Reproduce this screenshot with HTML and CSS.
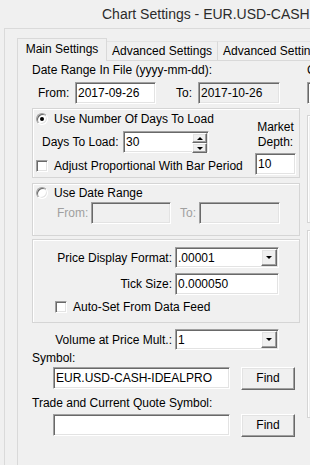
FILE: index.html
```html
<!DOCTYPE html>
<html lang="en">
<head>
    <meta charset="UTF-8">
    <meta name="viewport" content="width=device-width, initial-scale=1.0">
    <title>Chart Settings</title>
    <link rel="stylesheet" href="styles.css">
</head>
<body>
    <div class="titlebar">Chart Settings - EUR.USD-CASH</div>
    <div class="window">
        <div class="tabs">
            <div class="tab active">Main Settings</div>
            <div class="tab">Advanced Settings</div>
            <div class="tab">Advanced Settings 2</div>
        </div>
        <div class="tab-page">
            <div class="main-col">
                <div class="line top-label">Date Range In File (yyyy-mm-dd):</div>
                <div class="row file-range">
                    <span class="lbl lbl-from">From:</span>
                    <div class="field w-from">2017-09-26</div>
                    <span class="lbl lbl-to">To:</span>
                    <div class="field readonly w-to">2017-10-26</div>
                </div>

                <div class="group group-days">
                    <div class="days-left">
                        <div class="opt"><span class="radio checked"></span>Use Number Of Days To Load</div>
                        <div class="row days-row">
                            <span class="lbl lbl-days">Days To Load:</span>
                            <div class="field w-days">30
                                <span class="spin">
                                    <span class="spin-btn"><i class="tri up"></i></span>
                                    <span class="spin-btn"><i class="tri"></i></span>
                                </span>
                            </div>
                        </div>
                        <div class="opt check-row"><span class="check"></span>Adjust Proportional With Bar Period</div>
                    </div>
                    <div class="depth">
                        <div class="depth-lbl">Market<br>Depth:</div>
                        <div class="field w-depth">10</div>
                    </div>
                </div>

                <div class="group group-range">
                    <div class="opt"><span class="radio"></span>Use Date Range</div>
                    <div class="row range-row">
                        <span class="lbl disabled lbl-rfrom">From:</span>
                        <div class="field readonly w-rfrom"></div>
                        <span class="lbl disabled lbl-rto">To:</span>
                        <div class="field readonly w-rto"></div>
                    </div>
                </div>

                <div class="group group-price">
                    <div class="form-row first">
                        <span class="flabel">Price Display Format:</span>
                        <div class="field select">.00001<span class="drop"><i class="tri"></i></span></div>
                    </div>
                    <div class="form-row">
                        <span class="flabel">Tick Size:</span>
                        <div class="field tall">0.000050</div>
                    </div>
                    <div class="opt auto-set"><span class="check"></span>Auto-Set From Data Feed</div>
                </div>

                <div class="form-row volume">
                    <span class="flabel">Volume at Price Mult.:</span>
                    <div class="field select">1<span class="drop"><i class="tri"></i></span></div>
                </div>

                <div class="line symbol-label">Symbol:</div>
                <div class="row symbol-row">
                    <div class="field w-symbol">EUR.USD-CASH-IDEALPRO</div>
                    <button class="btn">Find</button>
                </div>

                <div class="line quote-label">Trade and Current Quote Symbol:</div>
                <div class="row quote-row">
                    <div class="field w-symbol"></div>
                    <button class="btn">Find</button>
                </div>
            </div>

            <div class="side-col">
                <div class="line top-label">Chart Region:</div>
                <div class="field side-field"></div>
                <div class="group side-box-1"></div>
                <div class="group side-box-2"></div>
            </div>
        </div>
    </div>
</body>
</html>
```

FILE: styles.css
```css
* {
    box-sizing: border-box;
}
body {
    margin: 0;
    width: 310px;
    height: 465px;
    overflow: hidden;
    background: #f0f0f0;
    font-family: 'Liberation Sans', Arial, sans-serif;
    font-size: 12px;
    color: #000;
}
.titlebar {
    height: 28px;
    padding-left: 102px;
    font-size: 14px;
    line-height: 28px;
    white-space: nowrap;
    color: #2b2b2b;
}
.window {
    width: 700px;
    height: 437px;
    margin-left: 4px;
    padding: 9px 0 0 12px;
    border-top: 1px solid #dadada;
    border-left: 1px solid #dadada;
}

/* tab strip */
.tabs {
    display: flex;
    align-items: flex-end;
    height: 22px;
}
.tab {
    height: 19px;
    padding: 0 5px;
    line-height: 19px;
    white-space: nowrap;
    border-top: 1px solid #e3e3e3;
    border-right: 1px solid #d9d9d9;
}
.tab.active {
    position: relative;
    z-index: 1;
    width: 90px;
    height: 23px;
    margin-bottom: -1px;
    padding: 0;
    text-align: center;
    line-height: 21px;
    background: #f0f0f0;
    border: 1px solid #d9d9d9;
    border-bottom: none;
}
.tab-page {
    display: flex;
    height: 420px;
    border-top: 1px solid #d9d9d9;
    border-left: 1px solid #d9d9d9;
}

/* generic bits */
.main-col {
    width: 268px;
    margin-left: 14px;
}
.side-col {
    width: 120px;
    margin-left: 7px;
}
.line {
    height: 14px;
    line-height: 14px;
    white-space: nowrap;
}
.row {
    display: flex;
    align-items: center;
}
.lbl {
    white-space: nowrap;
}
.disabled {
    color: #a0a0a0;
}
.field {
    position: relative;
    height: 22px;
    padding-left: 2px;
    line-height: 20px;
    background: #fff;
    white-space: nowrap;
    border: 1px solid;
    border-color: #a0a0a0 #fff #fff #a0a0a0;
    box-shadow: inset 1px 1px #696969, inset -1px -1px #e3e3e3;
}
.field.readonly {
    background: #f0f0f0;
}
.group {
    border: 1px solid #d5d5d5;
    box-shadow: inset 1px 1px #fff;
}
.opt {
    display: flex;
    align-items: center;
    height: 14px;
    line-height: 14px;
    white-space: nowrap;
}
.radio {
    position: relative;
    width: 12px;
    height: 12px;
    margin: 0 6px 0 2px;
    border-radius: 50%;
    background: #fff;
    border: 1px solid;
    border-color: #a0a0a0 #fff #fff #a0a0a0;
    box-shadow: inset 1px 1px #696969, inset -1px -1px #e3e3e3;
}
.radio.checked::after {
    content: '';
    position: absolute;
    left: 3px;
    top: 3px;
    width: 4px;
    height: 4px;
    border-radius: 50%;
    background: #000;
}
.check {
    width: 12px;
    height: 12px;
    margin: 0 6px 0 2px;
    background: #fff;
    border: 1px solid;
    border-color: #a0a0a0 #fff #fff #a0a0a0;
    box-shadow: inset 1px 1px #696969, inset -1px -1px #e3e3e3;
}
.tri {
    width: 0;
    height: 0;
    border-left: 3px solid transparent;
    border-right: 3px solid transparent;
    border-top: 3px solid #000;
}
.tri.up {
    border-top: none;
    border-bottom: 3px solid #000;
}
.btn,
.spin-btn,
.drop {
    background: #f0f0f0;
    border: 1px solid;
    border-color: #fff #696969 #696969 #fff;
    box-shadow: inset -1px -1px #a0a0a0, inset 1px 1px #e3e3e3;
}

/* date range in file */
.top-label {
    margin-top: 2px;
}
.file-range {
    height: 22px;
    margin-top: 5px;
    padding-left: 6px;
}
.lbl-from { width: 37px; }
.w-from { width: 81px; }
.lbl-to { width: 22px; margin-left: 20px; }
.w-to { width: 82px; }

/* days to load */
.group-days {
    display: flex;
    height: 70px;
    margin-top: 4px;
}
.days-left {
    padding-left: 1px;
}
.group-days .opt:first-child {
    margin-top: 3px;
}
.days-row {
    height: 22px;
    margin-top: 5px;
}
.lbl-days {
    width: 89px;
    padding-left: 8px;
}
.w-days {
    width: 86px;
}
.spin {
    position: absolute;
    top: 1px;
    right: 1px;
    display: flex;
    flex-direction: column;
}
.spin-btn {
    display: flex;
    align-items: center;
    justify-content: center;
    width: 15px;
    height: 10px;
}
.check-row {
    margin-top: 6px;
}
.depth {
    width: 41px;
    margin: 0 3px 0 auto;
    text-align: center;
}
.depth-lbl {
    margin-top: 11px;
    line-height: 15px;
}
.w-depth {
    margin-top: 3px;
    text-align: left;
}

/* date range */
.group-range {
    height: 53px;
    margin-top: 5px;
}
.group-range .opt {
    margin-top: 2px;
    padding-left: 1px;
}
.range-row {
    height: 22px;
    margin-top: 2px;
    padding-left: 24px;
}
.lbl-rfrom { width: 34px; }
.w-rfrom { width: 80px; }
.lbl-rto { width: 19px; margin-left: 9px; }
.w-rto { width: 81px; }

/* price format */
.group-price {
    height: 84px;
    margin-top: 3px;
}
.form-row {
    display: grid;
    grid-template-columns: 139px 104px;
    column-gap: 3px;
    align-items: center;
    margin-top: 5px;
}
.form-row.first {
    margin-top: 7px;
}
.flabel {
    text-align: right;
    white-space: nowrap;
}
.select {
    height: 21px;
}
.drop {
    position: absolute;
    top: 1px;
    right: 1px;
    display: flex;
    align-items: center;
    justify-content: center;
    width: 16px;
    height: 17px;
}
.auto-set {
    margin-top: 5px;
    padding-left: 20px;
}
.volume {
    grid-template-columns: 140px 104px;
    margin-top: 6px;
}

/* symbols */
.symbol-label {
    margin-top: 1px;
}
.symbol-row,
.quote-row {
    height: 22px;
    padding-left: 21px;
}
.symbol-row {
    margin-top: 2px;
}
.quote-label {
    margin-top: 7px;
}
.quote-row {
    margin-top: 4px;
}
.w-symbol {
    width: 177px;
}
.btn {
    width: 54px;
    height: 23px;
    margin-left: 11px;
    padding: 0;
    font-family: inherit;
    font-size: 12px;
    color: #000;
}

/* right column, mostly cut off */
.side-field {
    margin-top: 5px;
}
.side-box-1 {
    height: 108px;
    margin-top: 11px;
}
.side-box-2 {
    height: 188px;
    margin-top: 7px;
}
```
